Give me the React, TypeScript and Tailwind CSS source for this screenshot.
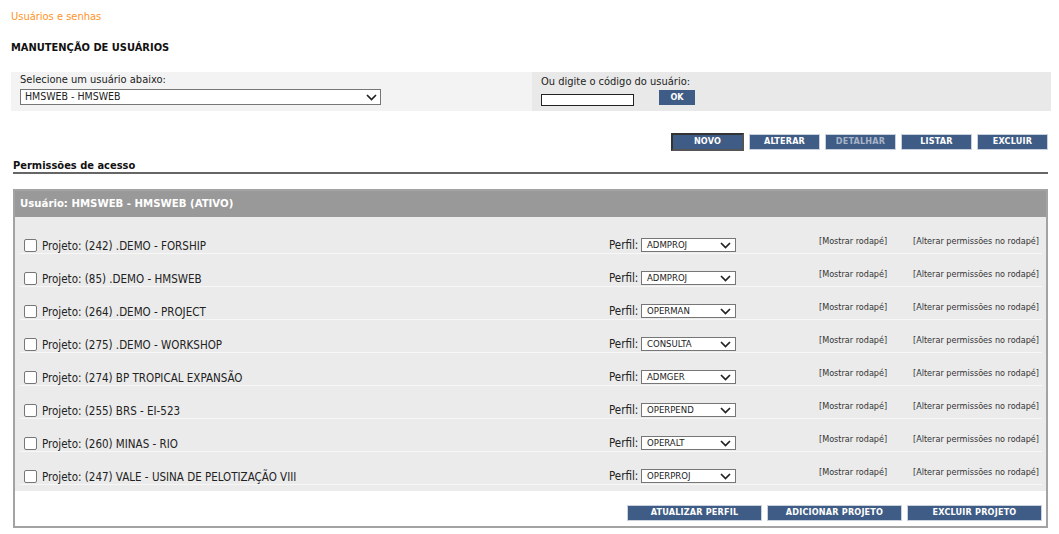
import React from "react";

const rows = [
  { p: "Projeto: (242) .DEMO - FORSHIP", perfil: "ADMPROJ" },
  { p: "Projeto: (85) .DEMO - HMSWEB", perfil: "ADMPROJ" },
  { p: "Projeto: (264) .DEMO - PROJECT", perfil: "OPERMAN" },
  { p: "Projeto: (275) .DEMO - WORKSHOP", perfil: "CONSULTA" },
  { p: "Projeto: (274) BP TROPICAL EXPANSÃO", perfil: "ADMGER" },
  { p: "Projeto: (255) BRS - EI-523", perfil: "OPERPEND" },
  { p: "Projeto: (260) MINAS - RIO", perfil: "OPERALT" },
  { p: "Projeto: (247) VALE - USINA DE PELOTIZAÇÃO VIII", perfil: "OPERPROJ" },
];

function Chevron() {
  return (
    <svg width="11" height="7" viewBox="0 0 11 7" className="shrink-0">
      <polyline points="1,1 5.5,5.5 10,1" fill="none" stroke="#222" strokeWidth="1.7" />
    </svg>
  );
}

function Btn({ label, w, disabled, focus }: { label: string; w: string; disabled?: boolean; focus?: boolean }) {
  return (
    <div
      className={
        "flex items-center justify-center bg-[#3e5c86] text-[9px] font-bold tracking-[0.2px] " +
        w +
        " " +
        (focus
          ? "h-[18px] border-2 border-t-[#333] border-l-[#333] border-r-[#555] border-b-[#555]"
          : "h-[16px] border border-[#c9d1dc]") +
        " " +
        (disabled ? "text-[#a9b4c6]" : "text-white")
      }
    >
      {label}
    </div>
  );
}

export default function App() {
  return (
    <div className="w-[1059px] min-h-[534px] bg-white text-[#222] font-['DejaVu_Sans_Condensed','DejaVu_Sans',sans-serif]">
      <div className="pl-[11px] pr-[8px] pt-[10px]">
        <div className="text-[11px] leading-[13px] text-[#ff9326]">Usuários e senhas</div>
        <div className="mt-[18px] text-[11px] leading-[13px] font-bold text-[#111]">MANUTENÇÃO DE USUÁRIOS</div>

        <div className="mt-[18px] flex h-[39px]">
          <div className="w-[521px] bg-[#f3f3f3] pl-[9px] pt-[1px]">
            <div className="text-[11px] leading-[13px]">Selecione um usuário abaixo:</div>
            <div className="mt-[3px] flex h-[16px] w-[361px] items-center justify-between border border-[#767676] bg-white pl-[4px] pr-[3px] text-[10.5px]">
              <span>HMSWEB - HMSWEB</span>
              <Chevron />
            </div>
          </div>
          <div className="flex-1 bg-[#e9e9e9] pl-[9px] pt-[3px]">
            <div className="text-[11px] leading-[13px]">Ou digite o código do usuário:</div>
            <div className="mt-[2px] flex items-start">
              <div className="mt-[4px] h-[12px] w-[93px] border border-[#222] bg-white" />
              <div className="ml-[25px] flex h-[15px] w-[36px] items-center justify-center bg-[#3e5c86] text-[9px] font-bold text-white">
                OK
              </div>
            </div>
          </div>
        </div>

        <div className="pl-[2px] pr-[3px]">
          <div className="mt-[22px] flex items-center justify-end gap-[5px]">
            <Btn label="NOVO" w="w-[73px]" focus />
            <Btn label="ALTERAR" w="w-[71px]" />
            <Btn label="DETALHAR" w="w-[71px]" disabled />
            <Btn label="LISTAR" w="w-[71px]" />
            <Btn label="EXCLUIR" w="w-[71px]" />
          </div>

          <div className="mt-[8px] border-b-2 border-[#666] text-[11px] leading-[13px] font-bold text-[#111]">
            Permissões de acesso
          </div>

          <div className="mt-[15px] border-2 border-[#a3a3a3]">
            <div className="flex h-[26px] items-center bg-[#999999] pl-[5px] text-[11.3px] font-bold text-white">
              Usuário: HMSWEB - HMSWEB (ATIVO)
            </div>
            <div className="bg-[#ebebeb] pl-[5px] pr-[4px] pt-[4px] pb-[6px]">
              {rows.map((r) => (
                <div key={r.p} className="flex h-[33px] items-start border-b border-[#f7f7f7] pt-[17px]">
                  <div className="flex w-[589px] items-start pl-[4px]">
                    <div className="mt-[1px] h-[13px] w-[13px] rounded-[2px] border border-[#777] bg-white" />
                    <div className="ml-[5px] mt-[1px] text-[11.5px] leading-[14px]">{r.p}</div>
                  </div>
                  <div className="flex w-[210px] items-start">
                    <span className="w-[32px] text-[11.5px] leading-[14px]">Perfil:</span>
                    <div className="flex h-[14px] w-[95px] items-center justify-between border border-[#767676] bg-white pl-[5px] pr-[4px] text-[9.5px]">
                      <span>{r.perfil}</span>
                      <Chevron />
                    </div>
                  </div>
                  <div className="-mt-[2px] w-[94px] text-[9px] leading-[11px] text-[#333]">[Mostrar rodapé]</div>
                  <div className="-mt-[2px] text-[9px] leading-[11px] text-[#333]">[Alterar permissões no rodapé]</div>
                </div>
              ))}
            </div>
            <div className="flex justify-end gap-[5px] bg-white pb-[5px] pr-[4px] pt-[14px]">
              <Btn label="ATUALIZAR PERFIL" w="w-[135px]" />
              <Btn label="ADICIONAR PROJETO" w="w-[135px]" />
              <Btn label="EXCLUIR PROJETO" w="w-[135px]" />
            </div>
          </div>
        </div>
      </div>
    </div>
  );
}
